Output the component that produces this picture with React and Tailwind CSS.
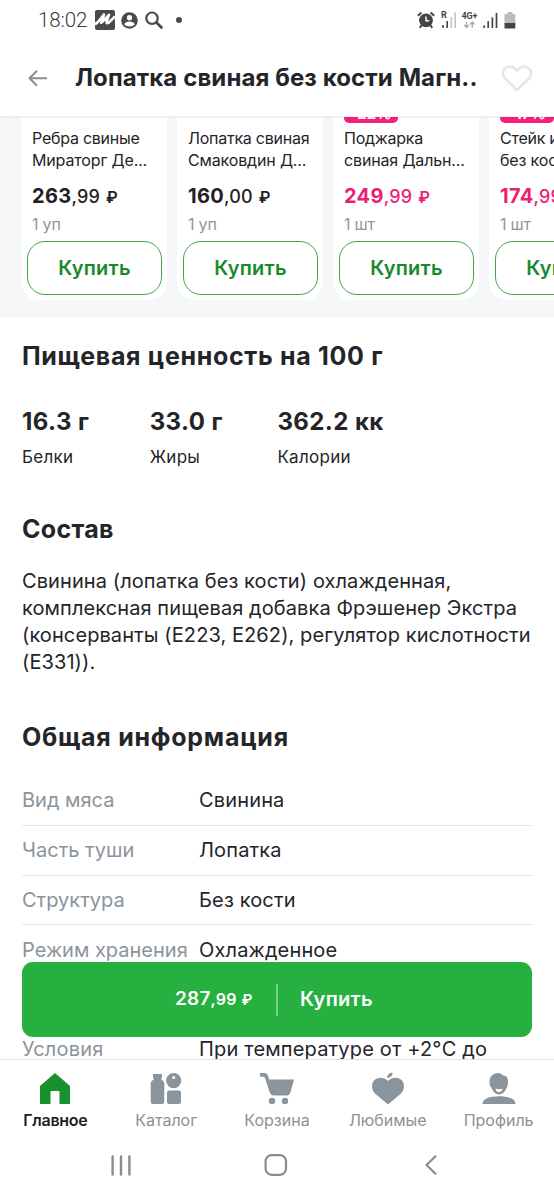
const products = [
  { lines: ["Ребра свиные", "Мираторг Де..."], rub: "263", kop: "99", unit: "1 уп" },
  { lines: ["Лопатка свиная", "Смаковдин Д..."], rub: "160", kop: "00", unit: "1 уп" },
  { lines: ["Поджарка", "свиная Дальн..."], rub: "249", kop: "99", unit: "1 шт", badge: "-22%" },
  { lines: ["Стейк из", "без кости"], rub: "174", kop: "99", unit: "1 шт", badge: "-17%" },
];

const nutrition = [
  { value: "16.3 г", label: "Белки" },
  { value: "33.0 г", label: "Жиры" },
  { value: "362.2 кк", label: "Калории" },
];

const composition = [
  "Свинина (лопатка без кости) охлажденная,",
  "комплексная пищевая добавка Фрэшенер Экстра",
  "(консерванты (E223, E262), регулятор кислотности",
  "(E331)).",
];

const info = [
  ["Вид мяса", "Свинина"],
  ["Часть туши", "Лопатка"],
  ["Структура", "Без кости"],
  ["Режим хранения", "Охлажденное"],
];

function StatusBar() {
  return (
    <div className="flex h-10 items-center pl-[38px] pr-[38px] text-[#4a4a4a]">
      <span className="w-[50px] font-[Roboto,sans-serif] text-[20.5px] leading-5 font-light tracking-[-0.1px] text-[#3c3c3c]">18:02</span>
      <svg className="ml-[7px]" width="20" height="20" viewBox="0 0 20 20">
        <rect width="20" height="20" rx="2" fill="#4a4a4a" />
        <path d="M0 14.5 L3 12 L9 4.5 L6.3 12.8 L14 4.8 L11.5 12 Q11.5 14 14 12.4 L20 6.5" fill="none" stroke="#fff" strokeWidth="2.6" strokeLinejoin="round" />
      </svg>
      <svg className="ml-[6px]" width="17" height="17" viewBox="0 0 17 17">
        <circle cx="8.5" cy="8.5" r="8.3" fill="#4a4a4a" />
        <circle cx="8.5" cy="5.7" r="2.6" fill="#fff" />
        <path d="M3.2 12.2 Q4.5 9.6 8.5 9.6 T13.8 12.2 Q12 14.4 8.5 14.4 T3.2 12.2Z" fill="#fff" />
      </svg>
      <svg className="ml-[7px]" width="19" height="19" viewBox="0 0 19 19" fill="none" stroke="#4a4a4a">
        <circle cx="7" cy="7.2" r="5.7" strokeWidth="2.2" />
        <path d="M11.4 11.5 L17.3 17.3" strokeWidth="2.8" />
      </svg>
      <span className="ml-[12px] size-[6px] rounded-full bg-[#4a4a4a]" />
      <div className="ml-auto flex items-center">
        <svg width="18" height="18" viewBox="0 0 18 18" fill="none" stroke="#454545">
          <circle cx="9" cy="9.3" r="6.9" fill="#454545" stroke="none" />
          <path d="M.8 4.8 L4.4 1.4 M17.2 4.8 L13.6 1.4 M4.8 14 L2.8 16.8 M13.2 14 L15.2 16.8" strokeWidth="2" />
          <path d="M9 5.4 V9.7 H12.2" stroke="#fff" strokeWidth="1.5" />
        </svg>
        <svg className="ml-[6px]" width="16" height="18" viewBox="0 0 16 18">
          <text x="0" y="7.2" className="fill-[#454545] font-[Roboto,sans-serif] text-[9px] font-bold">R</text>
          <path d="M2 14 V17 M6.2 10 V17" stroke="#454545" strokeWidth="1.6" />
          <path d="M10.3 6 V17 M14.2 1.5 V17" stroke="#c4c4c4" strokeWidth="1.6" />
        </svg>
        <svg className="ml-[4px]" width="18" height="18" viewBox="0 0 18 18">
          <text x="0.5" y="8.3" textLength="16" className="fill-[#454545] font-[Roboto,sans-serif] text-[9px] font-bold">4G+</text>
          <path d="M5.5 10.5 V16.3 M3.2 14 L5.5 16.4 L7.8 14 M11.3 17 V11 M9 13.4 L11.3 11 L13.6 13.4" fill="none" stroke="#adadad" strokeWidth="1.4" />
        </svg>
        <svg className="ml-[4px]" width="15" height="18" viewBox="0 0 15 18">
          <path d="M1.2 14.5 V17 M5.2 10.3 V17 M9.4 6.2 V17 M13.5 2 V17" stroke="#454545" strokeWidth="1.7" />
        </svg>
        <svg className="ml-[6px]" width="12" height="18" viewBox="0 0 12 18">
          <path d="M3.5 1 H8.5 V3 H11.3 V12.5 H0.5 V3 H3.5Z" fill="#bcbcbc" />
          <path d="M0.5 12 H11.3 V17.5 H0.5Z" fill="#454545" />
        </svg>
      </div>
    </div>
  );
}

function Header() {
  return (
    <header className="z-10 h-[117px] shrink-0 border-b border-[#eceef0] bg-white shadow-[0_1px_2px_rgba(0,0,0,0.05)]">
      <StatusBar />
      <div className="flex h-[76px] items-center pl-7">
        <svg width="20" height="18" viewBox="0 0 20 18" fill="none" stroke="#84909a" strokeWidth="2.1">
          <path d="M19 9.2 H1.6 M9 1.7 L1.5 9.2 L9 16.7" strokeLinejoin="round" />
        </svg>
        <h1 className="ml-[27px] w-[403px] whitespace-nowrap text-[24px] leading-8 font-bold tracking-[0.1px]">Лопатка свиная без кости Магн..</h1>
        <svg className="ml-[23px]" width="32" height="27" viewBox="0 0 32 27" fill="none" stroke="#e6e6e8" strokeWidth="2.6">
          <path d="M16 25 L4.6 14 C1.2 10.4 1 6.2 4 3.5 C7.6 0.6 12.6 1.3 16 5.8 C19.4 1.3 24.4 0.6 28 3.5 C31 6.2 30.8 10.4 27.4 14 Z" strokeLinejoin="round" />
        </svg>
      </div>
    </header>
  );
}

function ProductCard({ lines, rub, kop, unit, badge }) {
  return (
    <article className="flex h-[183px] w-[146px] shrink-0 flex-col rounded-b-[18px] bg-white px-[6px]">
      <div className="h-[6px] pl-[5px]">
        {badge && (
          <div className="flex h-[6px] w-[54px] items-end justify-center overflow-hidden rounded-b-[5px] bg-[#f5207a]">
            <span className="mb-[-1px] text-[15px] leading-5 font-bold text-white">{badge}</span>
          </div>
        )}
      </div>
      <p className="mt-[5px] h-[43px] overflow-hidden pl-[5px] text-[16px] leading-[21.5px] whitespace-nowrap">
        <span className="tracking-[-0.25px]">{lines[0]}</span>
        <br />
        <span className="tracking-[-0.15px]">{lines[1]}</span>
      </p>
      <p className={`mt-[13px] pl-[5px] leading-6 whitespace-nowrap ${badge ? "text-[#ee1e74]" : "text-[#1f2124]"}`}>
        <b className="text-[20px] font-bold tracking-[0.3px]">{rub}</b>
        <span className="text-[18px] font-medium tracking-[0.2px]">,{kop}</span>
        <span className="ml-[6px] text-[16px] font-semibold">₽</span>
      </p>
      <p className="mt-[5px] pl-[5px] text-[16px] leading-5 tracking-[-0.2px] text-[#8f979e]">{unit}</p>
      <button className="mt-[7px] h-[54px] w-[135px] shrink-0 rounded-[18px] border-[1.5px] border-[#3ba54d] text-[20px] leading-6 font-semibold tracking-[0.25px] text-[#198a2b]">Купить</button>
    </article>
  );
}

const tabs = [
  {
    label: "Главное",
    active: true,
    icon: <path d="M16 1 L31 14 V32 H20.5 V20 Q20.5 19 19.5 19 H12.5 Q11.5 19 11.5 20 V32 H1 V14 Z" />,
  },
  {
    label: "Каталог",
    icon: (
      <>
        <path d="M3 2 H12 V5.5 L11 7 C12.5 8.5 14.3 9 14.3 12 V29.5 Q14.3 32 11.8 32 H3.2 Q.7 32 .7 29.5 V12 C.7 9 2.8 8.5 4 7 L3 5.5Z" />
        <circle cx="23.7" cy="8.6" r="7.6" />
        <rect x="17" y="18.5" width="14" height="13.5" rx="2" />
        <circle cx="23.7" cy="5.5" r="1.6" fill="#fff" />
      </>
    ),
  },
  {
    label: "Корзина",
    icon: (
      <>
        <path d="M-1 1 H3 Q6 1 7 4 L8.2 7.5 H33 L29.5 20 Q28.7 23.5 25.5 23.5 H13 Q9.7 23.5 8.6 20 L4 6 Q3.6 4.8 2.5 4.8 H-1Z" />
        <circle cx="11" cy="29" r="3.2" />
        <circle cx="24" cy="29" r="3.2" />
      </>
    ),
  },
  {
    label: "Любимые",
    icon: (
      <>
        <path d="M16 32.5 L3 21.5 C-.5 18 -1 12 2 8.5 C6 4.5 12 5 16 9 C20 5 26 4.5 30 8.5 C33 12 32.5 18 29 21.5Z" />
        <path d="M15 6 Q15 1 20.5 .5 Q20.5 5.8 15 6Z" />
      </>
    ),
  },
  {
    label: "Профиль",
    icon: (
      <>
        <path d="M6.5 10 C6.5 4.5 10 1 15 1 C17.5 1 18.5 2 19.5 3.2 C23 3.3 25 5.5 25 9 C25 12 24.8 14.5 23.5 16 C22.5 19 19.5 22.5 16 22.5 C12.5 22.5 9.5 19 8.6 16 C7 14.5 6.5 12.5 6.5 10Z" />
        <path d="M12.5 16.5 Q16 18 19.5 16.5 Q19 20 16 20 T12.5 16.5Z" fill="#fff" />
        <path d="M-.5 32 C-.5 27 6 24.3 16 24.3 S32.5 27 32.5 32Z" />
      </>
    ),
  },
];

export default function App() {
  return (
    <div className="relative flex h-[1200px] w-[554px] flex-col overflow-hidden bg-white font-[Inter,sans-serif] text-[#232529]">
      <Header />

      <main className="min-h-0 flex-1 overflow-hidden">
        <section className="flex h-[200px] gap-[10px] overflow-hidden bg-[#f6f7f9] pl-[21px]">
          {products.map((p) => (
            <ProductCard key={p.rub} {...p} />
          ))}
        </section>

        <div className="px-[22px]">
          <h2 className="mt-[23px] text-[25px] leading-8 font-bold tracking-[0.68px]">Пищевая ценность на 100 г</h2>
          <div className="mt-[34px] flex">
            {nutrition.map((n) => (
              <div key={n.label} className="w-[127.7px] whitespace-nowrap">
                <p className="text-[24px] leading-8 font-bold tracking-[0.42px]">{n.value}</p>
                <p className="mt-[7px] text-[17px] leading-6 tracking-[0.3px]">{n.label}</p>
              </div>
            ))}
          </div>

          <h2 className="mt-[44px] text-[25px] leading-8 font-bold tracking-[0.3px]">Состав</h2>
          <p className="mt-[23px] text-[20px] leading-[27px] tracking-[0.09px] whitespace-nowrap">
            {composition.map((line) => (
              <span key={line} className="block">{line}</span>
            ))}
          </p>

          <h2 className="mt-[45px] text-[25px] leading-8 font-bold tracking-[0.75px]">Общая информация</h2>
          <dl className="mt-[23px] text-[20px] leading-6 whitespace-nowrap">
            {info.map(([name, value]) => (
              <div key={name} className="flex h-[49.8px] items-center border-b border-[#e4e7e9]">
                <dt className="w-[177px] text-[#8b949c]">{name}</dt>
                <dd className="tracking-[0.15px]">{value}</dd>
              </div>
            ))}
            <div className="mt-[62px] flex h-6">
              <dt className="w-[177px] tracking-[0.2px] text-[#8b949c]">Условия</dt>
              <dd className="tracking-[0.17px]">При температуре от +2°C до</dd>
            </div>
          </dl>
        </div>
      </main>

      <button className="absolute top-[962px] left-[22px] flex h-[75px] w-[510px] items-center rounded-[11px] bg-[#26b03f] pl-[153px] text-white">
        <span className="w-[101px] text-left leading-6 whitespace-nowrap">
          <b className="text-[19px] font-semibold tracking-[0.2px]">287</b>
          <span className="text-[16px] font-semibold tracking-[0.2px]">,99</span>
          <span className="ml-[5px] text-[15px] font-semibold">₽</span>
        </span>
        <span className="h-8 w-[2px] bg-[#7bd08a]" />
        <span className="ml-[22px] pb-px text-[20px] leading-6 font-semibold tracking-[0.3px]">Купить</span>
      </button>

      <footer className="h-[141px] shrink-0 border-t border-[#e1e4e7] bg-white">
        <nav className="flex pt-[12px]">
          {tabs.map((t) => (
            <div key={t.label} className={`flex w-[110.8px] flex-col items-center ${t.active ? "text-[#17902e]" : "text-[#8a949c]"}`}>
              <svg width="32" height="33" viewBox="0 0 32 33" fill="currentColor" className="overflow-visible">
                {t.icon}
              </svg>
              <span className={`mt-[5px] text-[16px] leading-5 ${t.active ? "font-semibold tracking-[-0.3px] text-[#1d1f22]" : "text-[#8a9197]"}`}>{t.label}</span>
            </div>
          ))}
        </nav>
        <div className="mt-[23px] flex h-6 items-center pl-[111px]">
          <svg width="20" height="21" viewBox="0 0 20 21" stroke="#8c8c8c" strokeWidth="2.4" strokeLinecap="round">
            <path d="M1.6 1.5 V19.5 M10 1.5 V19.5 M18.4 1.5 V19.5" />
          </svg>
          <svg className="ml-[133px]" width="24" height="22" viewBox="0 0 24 22" fill="none" stroke="#8c8c8c" strokeWidth="2.2">
            <rect x="1.6" y="1.2" width="20.4" height="19.6" rx="6" />
          </svg>
          <svg className="ml-[137px]" width="12" height="20" viewBox="0 0 12 20" fill="none" stroke="#8c8c8c" strokeWidth="2.2">
            <path d="M11 .8 L1.5 10 L11 19.2" />
          </svg>
        </div>
      </footer>
    </div>
  );
}
